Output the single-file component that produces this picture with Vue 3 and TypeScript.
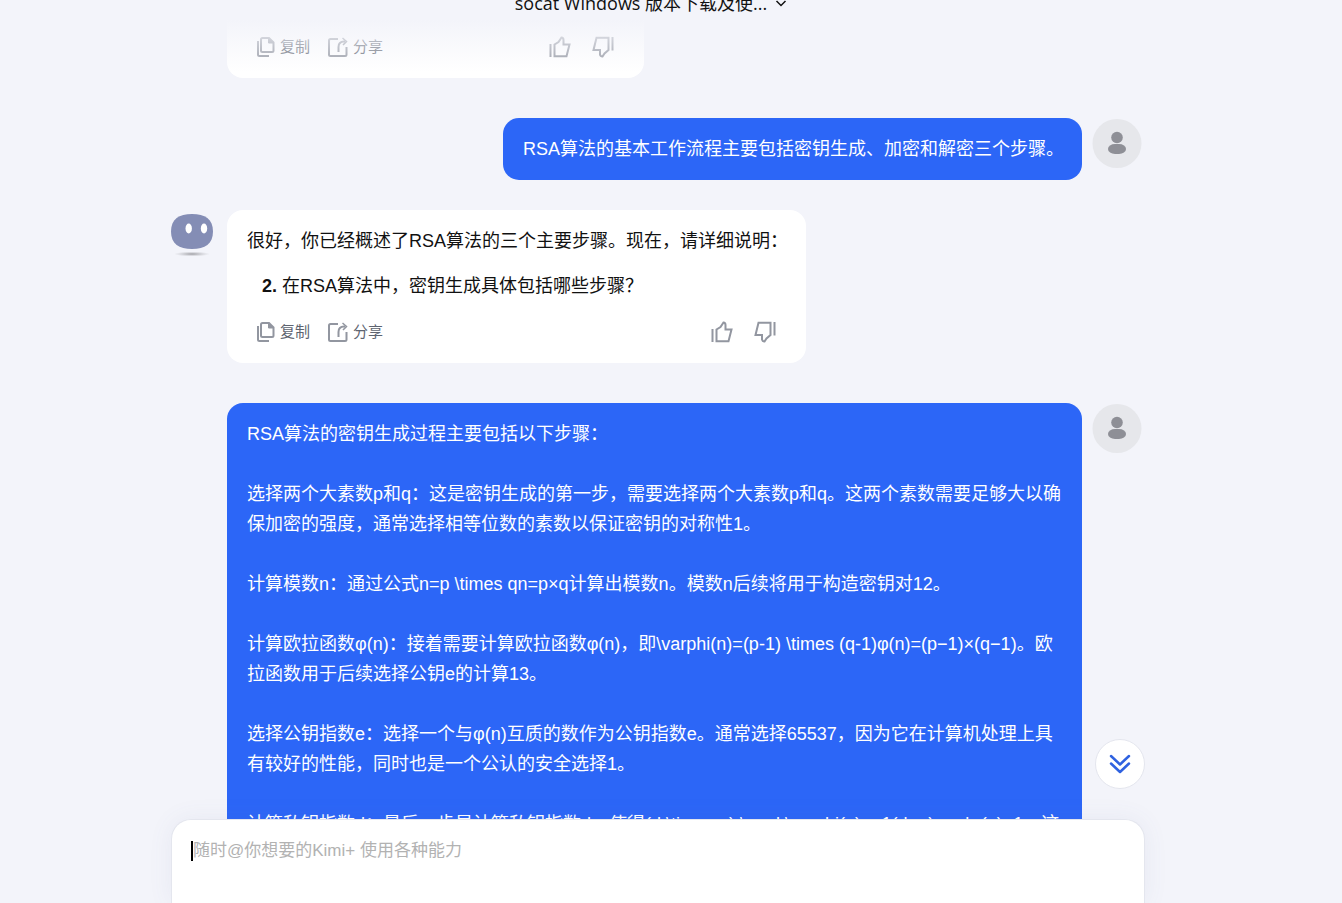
<script setup lang="ts">
import { ref } from 'vue'

interface Message {
  id: number
  role: 'user' | 'bot'
  text?: string
  start?: number
  items?: string[]
  clipped?: boolean
}

const title = 'socat Windows 版本下载及使...'
const draft = ref('')

const messages: Message[] = [
  { id: 1, role: 'bot', clipped: true },
  { id: 2, role: 'user', text: 'RSA算法的基本工作流程主要包括密钥生成、加密和解密三个步骤。' },
  {
    id: 3,
    role: 'bot',
    text: '很好，你已经概述了RSA算法的三个主要步骤。现在，请详细说明：',
    start: 2,
    items: ['在RSA算法中，密钥生成具体包括哪些步骤？'],
  },
  {
    id: 4,
    role: 'user',
    text: [
      'RSA算法的密钥生成过程主要包括以下步骤：',
      '选择两个大素数p和q：这是密钥生成的第一步，需要选择两个大素数p和q。这两个素数需要足够大以确保加密的强度，通常选择相等位数的素数以保证密钥的对称性1。',
      '计算模数n：通过公式n=p \\times qn=p×q计算出模数n。模数n后续将用于构造密钥对12。',
      '计算欧拉函数φ(n)：接着需要计算欧拉函数φ(n)，即\\varphi(n)=(p-1) \\times (q-1)φ(n)=(p−1)×(q−1)。欧拉函数用于后续选择公钥e的计算13。',
      '选择公钥指数e：选择一个与φ(n)互质的数作为公钥指数e。通常选择65537，因为它在计算机处理上具有较好的性能，同时也是一个公认的安全选择1。',
      '计算私钥指数d：最后一步是计算私钥指数d，使得(d \\times e) \\mod \\varphi(n) = 1(d×e)modφ(n)=1。这',
    ].join('\n\n'),
  },
]
</script>

<template>
  <div class="page">
    <header class="topbar">
      <button class="title" type="button">
        <span>{{ title }}</span>
        <svg width="12" height="12" viewBox="0 0 12 12" aria-hidden="true">
          <path d="M1.5 4 6 8.5 10.5 4" fill="none" stroke="currentColor" stroke-width="1.5" />
        </svg>
      </button>
    </header>

    <main class="thread">
      <article v-for="m in messages" :key="m.id" class="row" :class="[m.role, { clipped: m.clipped }]">
        <template v-if="m.role === 'bot'">
          <svg v-if="!m.clipped" class="bot-avatar" width="42" height="46" viewBox="0 0 42 46" aria-hidden="true">
            <defs>
              <radialGradient id="ground">
                <stop offset="0" stop-color="#8e8e93" stop-opacity=".85" />
                <stop offset="1" stop-color="#b5b5ba" stop-opacity="0" />
              </radialGradient>
            </defs>
            <ellipse cx="21" cy="44" rx="18" ry="2.5" fill="url(#ground)" />
            <path d="M21 4C34 4 42 9 42 21.500S34 39 21 39 0 34 0 21.500 8 4 21 4Z" fill="#848db5" />
            <ellipse cx="17.700" cy="18.500" rx="3.200" ry="5" fill="#fff" />
            <ellipse cx="33" cy="18.500" rx="3.200" ry="5" fill="#fff" />
          </svg>
          <div class="bubble">
            <p v-if="m.text">{{ m.text }}</p>
            <ol v-if="m.items" :start="m.start">
              <li v-for="item in m.items" :key="item">{{ item }}</li>
            </ol>
            <div class="tools">
              <button type="button">
                <svg width="18" height="20" viewBox="0 0 18 20" aria-hidden="true">
                  <path d="M1 4V17.500Q1 19 2.500 19H12" />
                  <path d="M5.500 1H12L16.500 5.500V13.500Q16.500 15 15 15H5.500Q4 15 4 13.500V2.500Q4 1 5.500 1Z" />
                  <path d="M11.500 1V6H16.500Z" fill="currentColor" stroke-width="1" />
                </svg>
                <span>复制</span>
              </button>
              <button type="button">
                <svg width="20" height="20" viewBox="0 0 20 20" aria-hidden="true">
                  <path d="M10 2H2.500Q1 2 1 3.500V17.500Q1 19 2.500 19H17Q18.500 19 18.500 17.500V10" />
                  <path d="M10.500 15V10Q10.500 4.500 16 4.500H17" />
                  <path d="M14.500 1 18.500 4.500 15 8" stroke-width="1.5" />
                </svg>
                <span>分享</span>
              </button>
              <button class="vote first" type="button" aria-label="赞">
                <svg width="22" height="22" viewBox="0 0 22 22" aria-hidden="true">
                  <path d="M1.500 8V21M5.500 8.500V20.200H17.500L20.500 8.500H14.500V4Q14.500 1.500 12.500 1.500L9.500 6 5.500 8.500Z" />
                </svg>
              </button>
              <button class="vote" type="button" aria-label="踩">
                <svg width="22" height="22" viewBox="0 0 22 22" aria-hidden="true">
                  <path d="M20.500 1V14.500M16.500 1.800V14L12.500 17.500 10.500 20.500Q8.500 20.500 8 18.500V14H1.500L4.500 1.800Z" />
                </svg>
              </button>
            </div>
          </div>
        </template>
        <template v-else>
          <div class="bubble">{{ m.text }}</div>
          <svg class="user-avatar" width="50" height="50" viewBox="0 0 50 50" aria-hidden="true">
            <circle cx="25" cy="25.500" r="24.500" fill="#e6e7eb" />
            <circle cx="25" cy="19.500" r="5.800" fill="#8e8f96" />
            <rect x="16" y="26" width="18" height="10" rx="7" ry="5" fill="#8e8f96" />
          </svg>
        </template>
      </article>
    </main>

    <footer class="composer">
      <button class="jump" type="button" aria-label="滚动到底部">
        <svg width="22" height="22" viewBox="0 0 22 22" aria-hidden="true">
          <path d="M2 3 11 11.500 20 3M2 10.500 11 19 20 10.500" fill="none" stroke="#2f62e0" stroke-width="2.500" stroke-linecap="round" stroke-linejoin="round" />
        </svg>
      </button>
      <span class="caret"></span>
      <textarea v-model="draft" rows="2" aria-label="消息" placeholder="随时@你想要的Kimi+ 使用各种能力"></textarea>
    </footer>
  </div>
</template>

<style>
body {
  margin: 0;
  background: #f3f4fa;
}
</style>

<style scoped>
.page {
  position: relative;
  display: flex;
  flex-direction: column;
  align-items: center;
  box-sizing: border-box;
  height: 100vh;
  padding-right: 26px;
  overflow: hidden;
  background: #f3f4fa;
  color: #111;
  font: 18px/30px "Liberation Sans", "Noto Sans CJK SC", sans-serif;
}
button {
  display: flex;
  align-items: center;
  padding: 0;
  border: 0;
  background: none;
  color: inherit;
  font: inherit;
  cursor: pointer;
}
.topbar {
  position: absolute;
  z-index: 1;
  top: 0;
  left: 0;
  right: 40px;
  display: flex;
  justify-content: center;
  height: 72px;
  background: linear-gradient(#f3f4fa 20px, rgba(243, 244, 250, 0));
  pointer-events: none;
}
.title {
  gap: 8px;
  height: 30px;
  margin-top: -12px;
  font-family: "Open Sans", "Noto Sans CJK SC", sans-serif;
  white-space: nowrap;
}
.thread {
  flex: 1;
  display: flex;
  flex-direction: column;
  box-sizing: border-box;
  width: 100%;
  max-width: 974px;
  min-height: 0;
  padding-right: 3px;
  overflow: hidden;
}
.row {
  display: flex;
  flex: none;
  align-items: flex-start;
}
.row.bot {
  gap: 14px;
  margin-bottom: 40px;
}
.row.user {
  justify-content: flex-end;
  gap: 10px;
  margin-bottom: 30px;
  padding-left: 56px;
}
.row.clipped {
  padding-left: 56px;
}
.bot-avatar,
.user-avatar {
  flex: none;
}
.bubble {
  box-sizing: border-box;
  border-radius: 16px;
}
.user .bubble {
  padding: 16px 18px 16px 20px;
  background: #2c66f7;
  color: #fff;
  white-space: pre-wrap;
}
.bot .bubble {
  padding: 16px 18px 20px 20px;
  background: #fff;
}
.clipped .bubble {
  min-width: 417px;
  padding-top: 36px;
}
p {
  margin: 0 0 15px;
}
ol {
  margin: 0 0 20px;
  padding-left: 35px;
}
li::marker {
  font-weight: 700;
}
.tools {
  display: flex;
  align-items: center;
  height: 22px;
  padding: 0 12px 0 10px;
  color: #9296a0;
}
.tools button {
  gap: 5px;
  margin-right: 18px;
}
.tools span {
  color: #5e6470;
  font-size: 15px;
  line-height: 20px;
}
.tools svg {
  fill: none;
  stroke: currentColor;
  stroke-width: 2;
}
.tools .vote {
  margin: 0 0 0 21px;
}
.tools .vote.first {
  margin-left: auto;
}
.composer {
  position: relative;
  display: flex;
  flex: none;
  box-sizing: border-box;
  width: 100%;
  max-width: 974px;
  height: 84px;
  padding: 16px 19px 0;
  border: 1px solid #e4e6ee;
  border-bottom: 0;
  border-radius: 20px 20px 0 0;
  background: #fff;
  box-shadow: 0 0 24px rgba(90, 100, 150, 0.08);
}
.caret {
  flex: none;
  width: 2px;
  height: 20px;
  margin-top: 5px;
  background: #000;
}
textarea {
  flex: 1;
  min-width: 0;
  padding: 0;
  border: 0;
  outline: 0;
  background: none;
  color: #111;
  font: 17px/30px "Liberation Sans", "Noto Sans CJK SC", sans-serif;
  resize: none;
}
textarea::placeholder {
  color: #b2b2b2;
}
.jump {
  position: absolute;
  right: -1px;
  bottom: 114px;
  justify-content: center;
  width: 50px;
  height: 50px;
  border: 1px solid #e4e6ee;
  border-radius: 50%;
  background: #fff;
}
</style>
